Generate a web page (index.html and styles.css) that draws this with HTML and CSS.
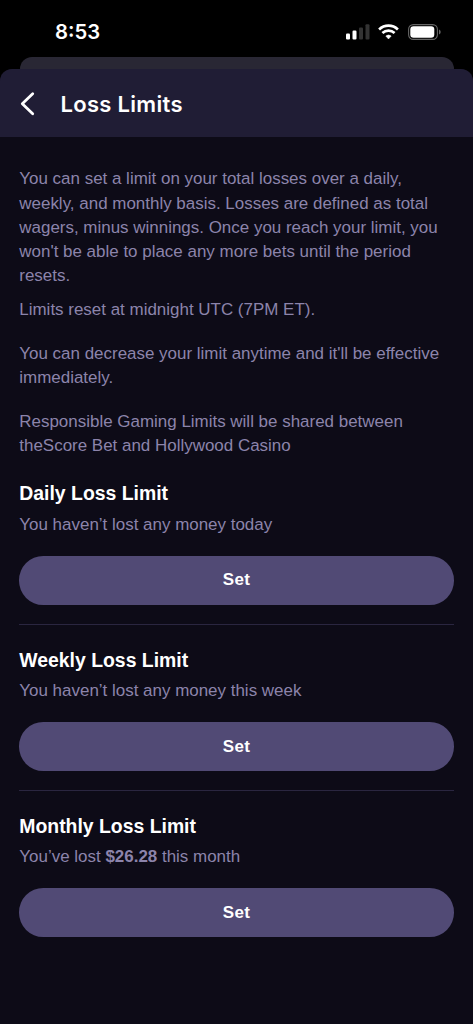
FILE: index.html
```html
<!DOCTYPE html>
<html lang="en">
<head>
<meta charset="utf-8">
<meta name="viewport" content="width=device-width, initial-scale=1">
<title>Loss Limits</title>
<link rel="stylesheet" href="styles.css">
</head>
<body>
<div class="status-bar">
  <span class="time">8:53</span>
  <div class="status-icons">
    <svg class="signal" width="24" height="16" viewBox="0 0 24 16">
      <rect x="0" y="9.5" width="4" height="6" rx="1.1" fill="#fff"/>
      <rect x="6.5" y="6.6" width="4" height="8.9" rx="1.1" fill="#fff"/>
      <rect x="13" y="3.4" width="4" height="12.1" rx="1.1" fill="#333"/>
      <rect x="19.5" y="0.2" width="4" height="15.3" rx="1.1" fill="#333"/>
    </svg>
    <svg class="wifi" width="21" height="16" viewBox="0 0 21 16">
      <g fill="none" stroke="#fff" stroke-width="2.7">
        <path d="M1.1 5.5C6.5.4 14.5.4 19.9 5.5"/>
        <path d="M4.4 9.1C7.9 5.9 13.1 5.9 16.6 9.1"/>
      </g>
      <path d="M7.8 12Q10.5 9.900 13.2 12L10.5 15Z" fill="#fff" stroke="#fff" stroke-width=".5" stroke-linejoin="round"/>
    </svg>
    <svg class="battery" width="33" height="16" viewBox="0 0 33 16">
      <rect x=".6" y=".6" width="28.8" height="14.8" rx="4.7" fill="none" stroke="#666" stroke-width="1.1"/>
      <rect x="2.3" y="2.3" width="24" height="11.4" rx="3.2" fill="#fff"/>
      <path d="M31 5.5Q32.7 6.3 32.7 8T31 10.5Z" fill="#666"/>
    </svg>
  </div>
</div>
<div class="back-sheet"></div>
<div class="sheet">
  <header class="header">
    <svg class="back" width="16" height="26" viewBox="0 0 16 26">
      <path d="M13.7 2.7L3.300 12.700L13.700 22.700" fill="none" stroke="#fff" stroke-width="2.8" stroke-linecap="round" stroke-linejoin="round"/>
    </svg>
    <h1 class="title">Loss Limits</h1>
  </header>
  <main class="content">
    <p class="text text-first">You can set a limit on your total losses over a daily,<br>weekly, and monthly basis. Losses are defined as total<br>wagers, minus winnings. Once you reach your limit, you<br>won't be able to place any more bets until the period<br>resets.</p>
    <p class="text">Limits reset at midnight UTC (7PM ET).</p>
    <p class="text">You can decrease your limit anytime and it'll be effective<br>immediately.</p>
    <p class="text">Responsible Gaming Limits will be shared between<br>theScore Bet and Hollywood Casino</p>
    <section class="limit">
      <h2 class="limit-title">Daily Loss Limit</h2>
      <p class="limit-status">You haven’t lost any money today</p>
      <button class="set">Set</button>
    </section>
    <section class="limit">
      <h2 class="limit-title">Weekly Loss Limit</h2>
      <p class="limit-status">You haven’t lost any money this week</p>
      <button class="set">Set</button>
    </section>
    <section class="limit">
      <h2 class="limit-title">Monthly Loss Limit</h2>
      <p class="limit-status">You’ve lost <b>$26.28</b> this month</p>
      <button class="set">Set</button>
    </section>
  </main>
</div>
</body>
</html>
```
FILE: styles.css
```css
* { box-sizing: border-box; }
body {
  margin: 0;
  min-height: 1024px;
  display: flex;
  flex-direction: column;
  background: #000;
  font-family: "Liberation Sans", Arial, sans-serif;
}
h1, h2, p { margin: 0; white-space: nowrap; }
.status-bar {
  height: 57px;
  padding: 6px 32px 0 55px;
  display: flex;
  align-items: center;
  justify-content: space-between;
}
.time {
  color: #fff;
  font: 600 20.3px/24px Inter, sans-serif;
}
.status-icons { display: flex; align-items: center; }
.wifi { margin-left: 8px; }
.battery { margin-left: 9px; }
.back-sheet {
  height: 24px;
  margin: 0 19.5px -12px;
  border-radius: 12px 12px 0 0;
  background: #292734;
}
.sheet {
  position: relative;
  flex: 1;
  border-radius: 12px 12px 0 0;
  overflow: hidden;
  background: #0d0b17;
}
.header {
  height: 68px;
  padding: 2px 19px 0;
  display: flex;
  align-items: center;
  gap: 25.5px;
  background: #201d35;
}
.title {
  color: #fff;
  font: 600 22px/28px Inter, sans-serif;
  letter-spacing: 0.3px;
}
.content { padding: 30.3px 19.3px 0; }
.text, .limit-status {
  color: #8c84ab;
  font-size: 16.97px;
  line-height: 24.25px;
}
.text { margin-bottom: 19.4px; }
.text-first { margin-bottom: 9.9px; }
.limit {
  height: 166.2px;
  padding-top: 19.4px;
  border-bottom: 1.2px solid #2a2640;
}
.limit:first-of-type { height: 147.3px; padding-top: 0.5px; }
.limit:last-child { border-bottom: 0; }
.limit-title {
  margin-top: 2px;
  color: #fff;
  font-size: 19.4px;
  line-height: 27px;
}
.limit-status { margin-top: 5.5px; }
.set {
  display: block;
  width: 100%;
  height: 48.5px;
  margin-top: 19px;
  padding: 0;
  border: 0;
  border-radius: 24.25px;
  background: #514a75;
  color: #fff;
  font: bold 17px/24px "Liberation Sans", Arial, sans-serif;
  letter-spacing: 0.4px;
}
```
